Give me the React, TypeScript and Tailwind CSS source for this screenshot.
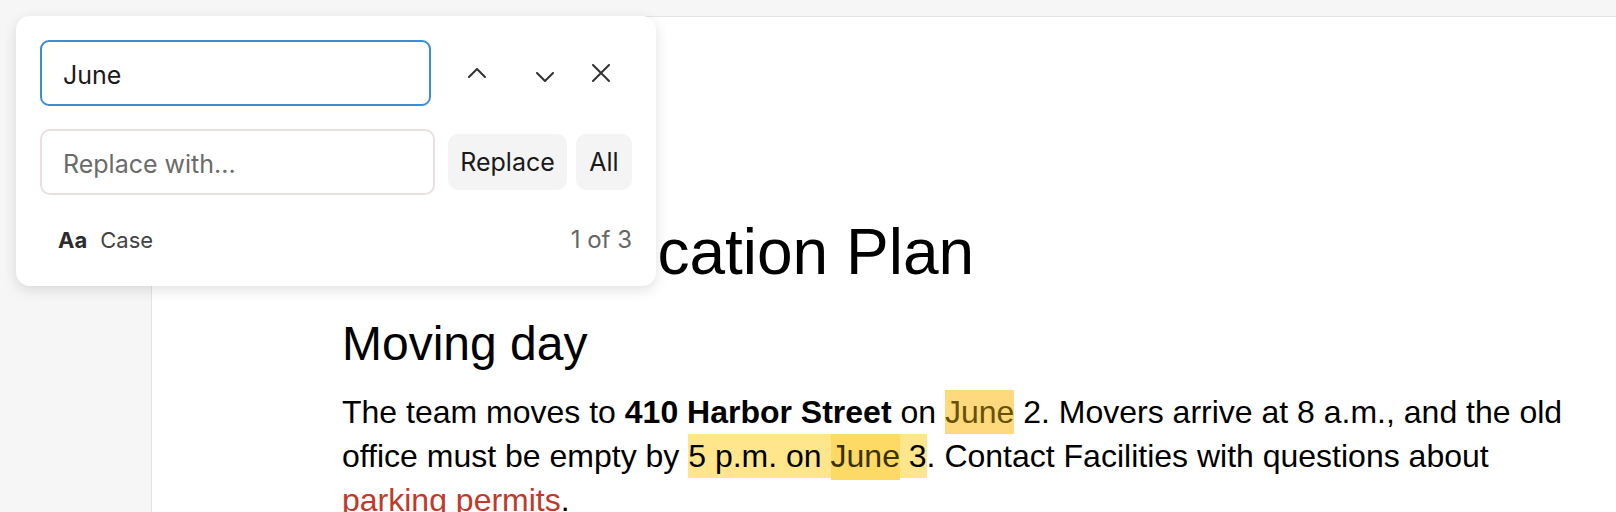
import React from "react";

function ChevronUp() {
  return (
    <svg width="18" height="10" viewBox="0 0 18 10" fill="none">
      <polyline points="1,9 9,1 17,9" stroke="#333" strokeWidth="2" strokeLinecap="round" strokeLinejoin="round" />
    </svg>
  );
}

function ChevronDown() {
  return (
    <svg width="18" height="10" viewBox="0 0 18 10" fill="none" className="mt-[8px]">
      <polyline points="1,1 9,9 17,1" stroke="#333" strokeWidth="2" strokeLinecap="round" strokeLinejoin="round" />
    </svg>
  );
}

function CloseIcon() {
  return (
    <svg width="18" height="18" viewBox="0 0 18 18" fill="none">
      <path d="M1 1L17 17M17 1L1 17" stroke="#333" strokeWidth="2" strokeLinecap="round" />
    </svg>
  );
}

function FindPanel() {
  return (
    <div className="absolute left-[16px] top-[16px] w-[640px] rounded-[14px] bg-white px-[24px] pt-[24px] pb-[31px] font-['Inter',sans-serif] shadow-[0_4px_14px_rgba(0,0,0,0.12)]">
      <div className="flex items-center">
        <input
          defaultValue="June"
          className="h-[66px] w-[391px] rounded-[9px] border-2 border-[#3b8dd5] pl-[21px] pt-[3px] text-[25px] text-[#1a1a1a] outline-none"
        />
        <button className="ml-[24px] flex h-[44px] w-[44px] items-center justify-center">
          <ChevronUp />
        </button>
        <button className="ml-[24px] flex h-[44px] w-[44px] items-center justify-center">
          <ChevronDown />
        </button>
        <button className="ml-[12px] flex h-[44px] w-[44px] items-center justify-center">
          <CloseIcon />
        </button>
      </div>
      <div className="mt-[23px] flex items-center">
        <input
          placeholder="Replace with..."
          className="h-[66px] w-[395px] rounded-[10px] border-2 border-[#ebe0e0] pl-[21px] pt-[3px] text-[25px] text-[#1a1a1a] outline-none placeholder:text-[#6b6b6b]"
        />
        <button className="ml-[13px] h-[56px] w-[119px] rounded-[10px] bg-[#f4f4f4] pt-[2px] text-[25px] text-[#1a1a1a]">
          Replace
        </button>
        <button className="ml-[9px] h-[56px] w-[56px] rounded-[10px] bg-[#f4f4f4] pt-[2px] text-[25px] text-[#1a1a1a]">
          All
        </button>
      </div>
      <div className="mt-[30px] flex items-center justify-between pl-[18px] leading-[30px]">
        <div className="flex items-center gap-[13px] text-[22px]">
          <span className="font-bold text-[#2b2b2b]">Aa</span>
          <span className="text-[#444]">Case</span>
        </div>
        <span className="text-[24px] text-[#666]">1 of 3</span>
      </div>
    </div>
  );
}

export default function App() {
  return (
    <div className="relative h-[512px] w-full overflow-hidden bg-[#f6f6f6]">
      <div className="ml-[151px] mt-[16px] h-[600px] w-[1632px] border-l border-t border-[#e3e3e3] bg-white pl-[190px] pt-[197px] font-['Liberation_Sans',Arial,sans-serif] text-black">
        <div className="w-[1248px]">
          <h1 className="text-[64px] leading-[1.2]">Office Relocation Plan</h1>
          <h2 className="mt-[24px] text-[48px] leading-[1.2]">Moving day</h2>
          <p className="mt-[18px] text-[32px] leading-[44px]">
            The team moves to <strong className="font-bold">410 Harbor Street</strong> on{" "}
            <span className="bg-[#fed97e] py-[4px] text-[#6b5000]">June</span> 2. Movers arrive at 8 a.m., and
            the old office must be empty by{" "}
            <span className="bg-[#ffe68d] py-[4px]">
              5 p.m. on <span className="bg-[#fdd965] pt-[4px] pb-[6px] text-[#3b3000]">June</span> 3
            </span>
            . Contact Facilities with questions about{" "}
            <span className="text-[#c0392b]">parking permits</span>.
          </p>
        </div>
      </div>
      <FindPanel />
    </div>
  );
}
